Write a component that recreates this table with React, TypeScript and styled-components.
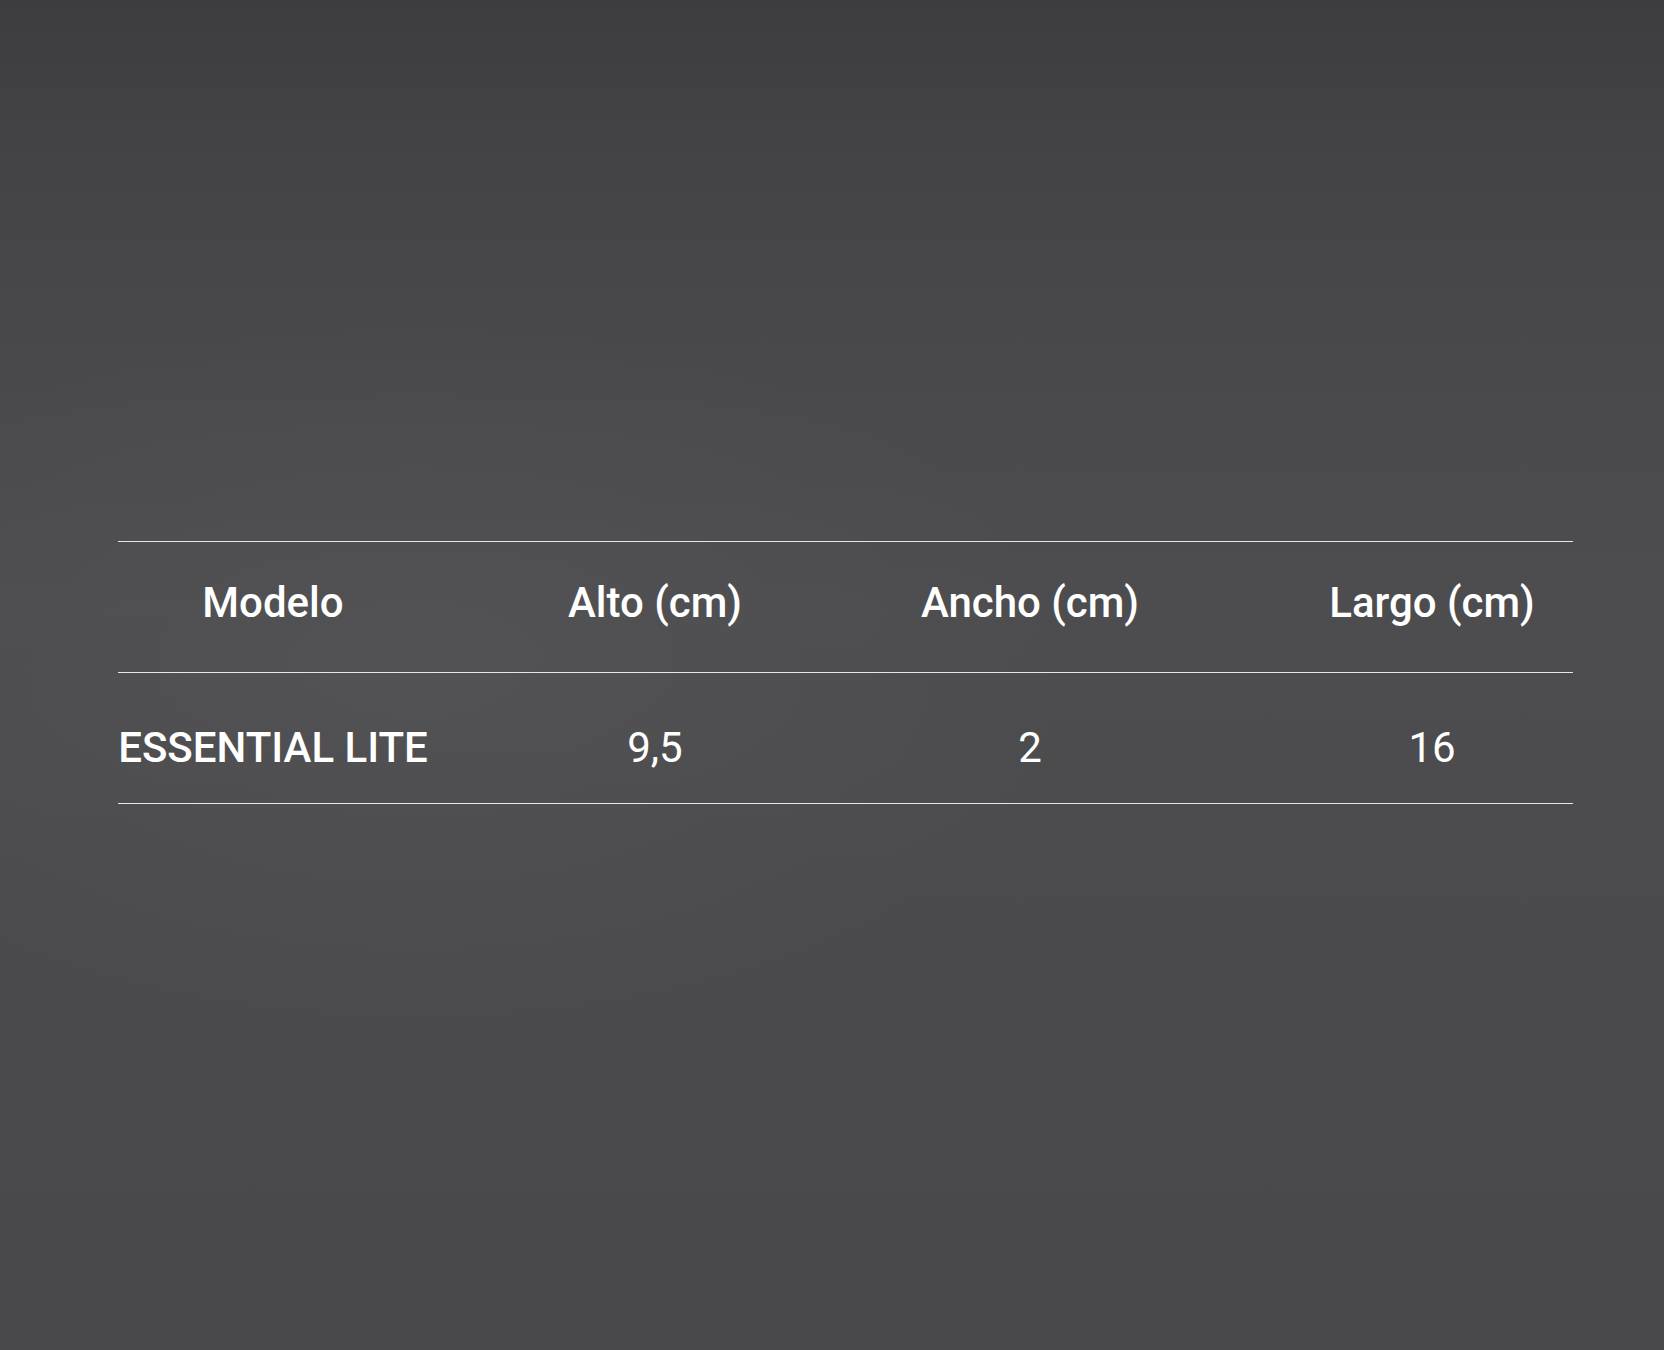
import styled, { createGlobalStyle } from 'styled-components';

const GlobalStyle = createGlobalStyle`
  html, body {
    margin: 0;
    padding: 0;
  }
  body {
    font-family: Roboto, "Liberation Sans", sans-serif;
    color: #ffffff;
  }
`;

const columns = [
  { key: 'model', label: 'Modelo' },
  { key: 'alto', label: 'Alto (cm)' },
  { key: 'ancho', label: 'Ancho (cm)' },
  { key: 'largo', label: 'Largo (cm)' },
];

const rows = [{ model: 'ESSENTIAL LITE', alto: '9,5', ancho: '2', largo: '16' }];

const App = () => {
  return (
    <Page>
      <GlobalStyle />
      <SizeTable>
        <Row $head>
          {columns.map((col, index) => (
            <HeadCell key={col.key} $last={index === columns.length - 1}>
              {col.label}
            </HeadCell>
          ))}
        </Row>
        {rows.map((row) => (
          <Row key={row.model}>
            {columns.map((col, index) => (
              <BodyCell
                key={col.key}
                $strong={index === 0}
                $last={index === columns.length - 1}
              >
                {row[col.key as keyof typeof row]}
              </BodyCell>
            ))}
          </Row>
        ))}
      </SizeTable>
    </Page>
  );
};

export default App;

const Page = styled.div`
  min-height: 1350px;
  box-sizing: border-box;
  display: flex;
  align-items: flex-start;
  padding: 541px 91px 0 118px;
  background:
    radial-gradient(ellipse 60% 40% at 25% 50%, rgba(255, 255, 255, 0.03), transparent 70%),
    linear-gradient(180deg, #3d3d3f 0%, #444446 12%, #4a4a4c 30%, #4d4d4f 45%, #4b4b4d 65%, #49494b 100%);
`;

const SizeTable = styled.div`
  width: 100%;
  display: flex;
  flex-direction: column;
  border-top: 1.5px solid #e6e6e6;
`;

const Row = styled.div<{ $head?: boolean }>`
  display: grid;
  grid-template-columns: 310px 454px 296px 1fr;
  align-items: center;
  height: 131px;
  box-sizing: border-box;
  border-bottom: 1.5px solid #e6e6e6;
  padding: ${({ $head }) => ($head ? '0 0 10px' : '19px 0 0')};
`;

const HeadCell = styled.div<{ $last?: boolean }>`
  text-align: center;
  font-size: 42px;
  font-weight: 500;
  padding-left: ${({ $last }) => ($last ? '113px' : '0')};
`;

const BodyCell = styled.div<{ $strong?: boolean; $last?: boolean }>`
  text-align: center;
  font-size: 42px;
  font-weight: ${({ $strong }) => ($strong ? 500 : 400)};
  padding-left: ${({ $last }) => ($last ? '113px' : '0')};
`;
